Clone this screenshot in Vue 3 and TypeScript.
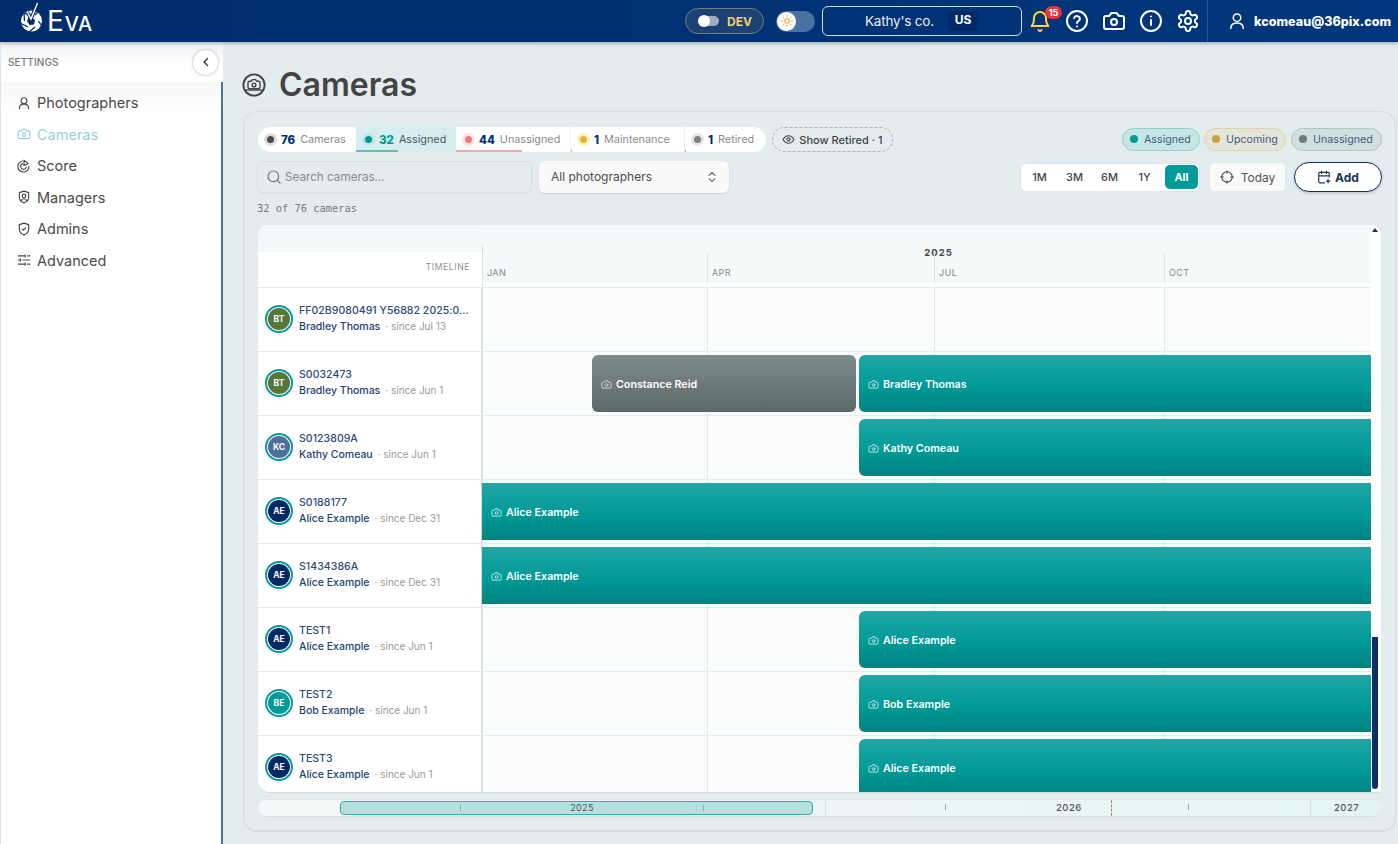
<script setup lang="ts">
interface Bar { left: number; width: number; label: string; grey?: boolean }
interface Row { code: string; name: string; since: string; initials: string; color: string; bars: Bar[] }

const nav = [
  { label: 'Photographers', icon: 'user' },
  { label: 'Cameras', icon: 'camera', active: true },
  { label: 'Score', icon: 'score' },
  { label: 'Managers', icon: 'manager' },
  { label: 'Admins', icon: 'admin' },
  { label: 'Advanced', icon: 'sliders' },
]

const tabs = [
  { count: 76, label: 'Cameras', dot: '#4a4a4a', halo: '#dcdcdc', cls: 'first', line: 0, lineColor: '' },
  { count: 32, label: 'Assigned', dot: '#009b98', halo: '#bfe4e4', cls: 'on', line: 42, lineColor: '#5dbfbc' },
  { count: 44, label: 'Unassigned', dot: '#ee7a80', halo: '#fbe1e2', cls: '', line: 66, lineColor: '#f5a9ac' },
  { count: 1, label: 'Maintenance', dot: '#dfba22', halo: '#f8f0cc', cls: '', line: 1, lineColor: '#e4c850' },
  { count: 1, label: 'Retired', dot: '#808080', halo: '#e4e4e4', cls: 'last', line: 1, lineColor: '#aaaaaa' },
]

const legend = [
  { label: 'Assigned', cls: 'lg-teal' },
  { label: 'Upcoming', cls: 'lg-gold' },
  { label: 'Unassigned', cls: 'lg-grey' },
]

const ranges = ['1M', '3M', '6M', '1Y', 'All']
const months = [
  { label: 'JAN', left: 0 },
  { label: 'APR', left: 225 },
  { label: 'JUL', left: 452 },
  { label: 'OCT', left: 682 },
]

const green = '#56763a'
const navy = '#002a66'
const rest = 889 - 377

const rows: Row[] = [
  { code: 'FF02B9080491 Y56882 2025:0...', name: 'Bradley Thomas', since: '· since Jul 13', initials: 'BT', color: green, bars: [] },
  { code: 'S0032473', name: 'Bradley Thomas', since: '· since Jun 1', initials: 'BT', color: green, bars: [
    { left: 110, width: 264, label: 'Constance Reid', grey: true },
    { left: 377, width: rest, label: 'Bradley Thomas' },
  ] },
  { code: 'S0123809A', name: 'Kathy Comeau', since: '· since Jun 1', initials: 'KC', color: '#4e6f9c', bars: [{ left: 377, width: rest, label: 'Kathy Comeau' }] },
  { code: 'S0188177', name: 'Alice Example', since: '· since Dec 31', initials: 'AE', color: navy, bars: [{ left: 0, width: 889, label: 'Alice Example' }] },
  { code: 'S1434386A', name: 'Alice Example', since: '· since Dec 31', initials: 'AE', color: navy, bars: [{ left: 0, width: 889, label: 'Alice Example' }] },
  { code: 'TEST1', name: 'Alice Example', since: '· since Jun 1', initials: 'AE', color: navy, bars: [{ left: 377, width: rest, label: 'Alice Example' }] },
  { code: 'TEST2', name: 'Bob Example', since: '· since Jun 1', initials: 'BE', color: '#009b98', bars: [{ left: 377, width: rest, label: 'Bob Example' }] },
  { code: 'TEST3', name: 'Alice Example', since: '· since Jun 1', initials: 'AE', color: navy, bars: [{ left: 377, width: rest, label: 'Alice Example' }] },
]
</script>

<template>
  <div class="app">
    <header class="top">
      <div class="logo">
        <svg class="logo-mark" viewBox="0 0 24 32" width="24" height="32" aria-hidden="true">
          <circle cx="11.500" cy="19" r="10.500" fill="#fff" />
          <g stroke="#002c6b" stroke-width="1.300">
            <path d="M8 13 L1 9" />
            <path d="M15 13 L22 6" />
            <path d="M18.500 19 L23 26" />
            <path d="M15 25 L8 31" />
            <path d="M8 25 L0 21" />
            <path d="M4.500 19 L4 10" />
          </g>
          <path d="M11.500 15 L15 18 L14 22.500 L9.500 23 L7 19 L8.500 15.500 Z" fill="#002c6b" />
          <path d="M7.500 10 L11 17 L17.500 1" fill="none" stroke="#002c6b" stroke-width="3.500" />
          <path d="M7.500 10 L11 17 L17.500 1" fill="none" stroke="#fff" stroke-width="1.400" />
        </svg>
        <span class="logo-text"><span class="logo-e">E</span>VA</span>
      </div>
      <div class="top-right">
        <div class="dev-pill"><span class="dev-switch"><i></i></span><span class="dev-label">DEV</span></div>
        <div class="theme-switch">
          <span class="sun">
            <svg viewBox="0 0 16 16" width="14" height="14" aria-hidden="true">
              <circle cx="8" cy="8" r="2.600" fill="none" stroke="#f0a63a" stroke-width="1.200" />
              <path d="M8 1v2.400M8 12.600V15M1 8h2.400M12.600 8H15M3 3l1.700 1.700M11.300 11.300 13 13M13 3l-1.700 1.700M4.700 11.300 3 13" stroke="#f0a63a" stroke-width="1.100" />
            </svg>
          </span>
        </div>
        <div class="company"><span class="company-name">Kathy's co.</span><span class="company-tag">US</span></div>
        <div class="bell">
          <svg viewBox="0 0 24 24" width="24" height="24" fill="none" stroke="#ffd92e" stroke-width="2" stroke-linecap="round" stroke-linejoin="round" aria-hidden="true">
            <path d="M6 9a6 6 0 0 1 12 0c0 6 2.500 8 2.500 8h-17S6 15 6 9" />
            <path d="M10.300 21a2 2 0 0 0 3.400 0" />
          </svg>
          <span class="badge">15</span>
        </div>
        <svg class="top-ico" viewBox="0 0 24 24" width="24" height="24" fill="none" stroke="#fff" stroke-width="2" stroke-linecap="round" stroke-linejoin="round" aria-hidden="true">
          <circle cx="12" cy="12" r="10" />
          <path d="M9.100 9a3 3 0 0 1 5.800 1c0 2-3 2.500-3 4" />
          <path d="M12 17.500h.01" />
        </svg>
        <svg class="top-ico" viewBox="0 0 24 24" width="24" height="24" fill="none" stroke="#fff" stroke-width="2" stroke-linecap="round" stroke-linejoin="round" aria-hidden="true">
          <path d="M14.500 4h-5L7 7H4a2 2 0 0 0-2 2v9a2 2 0 0 0 2 2h16a2 2 0 0 0 2-2V9a2 2 0 0 0-2-2h-3z" />
          <circle cx="12" cy="13" r="3" />
        </svg>
        <svg class="top-ico" viewBox="0 0 24 24" width="24" height="24" fill="none" stroke="#fff" stroke-width="2" stroke-linecap="round" stroke-linejoin="round" aria-hidden="true">
          <circle cx="12" cy="12" r="10" />
          <path d="M12 16v-5M12 7.500h.01" />
        </svg>
        <svg class="top-ico" viewBox="0 0 24 24" width="24" height="24" fill="none" stroke="#fff" stroke-width="2" stroke-linecap="round" stroke-linejoin="round" aria-hidden="true">
          <path d="M12.220 2h-.44a2 2 0 0 0-2 2v.18a2 2 0 0 1-1 1.730l-.43.250a2 2 0 0 1-2 0l-.15-.080a2 2 0 0 0-2.730.730l-.22.380a2 2 0 0 0 .730 2.730l.15.100a2 2 0 0 1 1 1.720v.510a2 2 0 0 1-1 1.740l-.15.090a2 2 0 0 0-.730 2.730l.22.380a2 2 0 0 0 2.730.730l.15-.080a2 2 0 0 1 2 0l.43.250a2 2 0 0 1 1 1.730V20a2 2 0 0 0 2 2h.44a2 2 0 0 0 2-2v-.18a2 2 0 0 1 1-1.730l.43-.250a2 2 0 0 1 2 0l.15.080a2 2 0 0 0 2.730-.730l.22-.390a2 2 0 0 0-.730-2.730l-.15-.080a2 2 0 0 1-1-1.740v-.500a2 2 0 0 1 1-1.740l.15-.090a2 2 0 0 0 .730-2.730l-.22-.380a2 2 0 0 0-2.730-.730l-.15.080a2 2 0 0 1-2 0l-.43-.250a2 2 0 0 1-1-1.730V4a2 2 0 0 0-2-2z" />
          <circle cx="12" cy="12" r="3" />
        </svg>
        <div class="user">
          <svg viewBox="0 0 24 24" width="20" height="20" fill="none" stroke="#fff" stroke-width="1.800" stroke-linecap="round" aria-hidden="true">
            <circle cx="12" cy="8" r="4.500" />
            <path d="M4.500 21c0-4 3-6.500 7.500-6.500s7.500 2.500 7.500 6.500" />
          </svg>
          <span class="email">kcomeau@36pix.com</span>
        </div>
      </div>
    </header>

    <div class="body">
      <aside class="side">
        <div class="side-head">
          <span>SETTINGS</span>
          <button class="collapse" type="button" aria-label="Collapse">
            <svg viewBox="0 0 12 12" width="12" height="12" fill="none" stroke="#333" stroke-width="1.300" stroke-linecap="round" stroke-linejoin="round"><path d="M7.500 2.500 4 6l3.500 3.500" /></svg>
          </button>
        </div>
        <nav class="nav">
          <div v-for="item in nav" :key="item.label" class="nav-item" :class="{ active: item.active }">
            <svg viewBox="0 0 24 24" width="14" height="14" fill="none" stroke="currentColor" stroke-width="2" stroke-linecap="round" stroke-linejoin="round" aria-hidden="true">
              <template v-if="item.icon === 'user'">
                <circle cx="12" cy="8" r="5" /><path d="M4 22c0-5 3-8 8-8s8 3 8 8" />
              </template>
              <template v-else-if="item.icon === 'camera'">
                <path d="M14.500 4h-5L7 7H4a2 2 0 0 0-2 2v9a2 2 0 0 0 2 2h16a2 2 0 0 0 2-2V9a2 2 0 0 0-2-2h-3z" /><circle cx="12" cy="13" r="3" />
              </template>
              <template v-else-if="item.icon === 'score'">
                <path d="M9 3.500a9.500 9.500 0 1 0 11.500 9" /><path d="M9.500 8a5 5 0 1 0 6.500 6" /><path d="M12 2v9l7-3z" />
              </template>
              <template v-else-if="item.icon === 'manager'">
                <path d="M12 2 4 4.500V12c0 5 3.500 8.500 8 10 4.500-1.500 8-5 8-10V4.500z" /><circle cx="12" cy="10" r="3" /><path d="M7.500 18c1-2 2.500-3 4.500-3s3.500 1 4.500 3" />
              </template>
              <template v-else-if="item.icon === 'admin'">
                <path d="M12 2 4 4.500V12c0 5 3.500 8.500 8 10 4.500-1.500 8-5 8-10V4.500z" /><path d="m9 12 2 2 4-4" />
              </template>
              <template v-else>
                <path d="M2 5h12M18 5h4M2 12h4M10 12h12M2 19h12M18 19h4M14 3v4M6 10v4M14 17v4" />
              </template>
            </svg>
            <span>{{ item.label }}</span>
          </div>
        </nav>
      </aside>

      <main class="main">
        <div class="title">
          <svg viewBox="0 0 26 26" width="24" height="24" fill="none" stroke="#444" stroke-width="2" aria-hidden="true">
            <circle cx="13" cy="13" r="11.500" />
            <path d="M8 9h2l1.300-1.800h3.400L16 9h2a1.500 1.500 0 0 1 1.500 1.500v5A1.500 1.500 0 0 1 18 17H8a1.500 1.500 0 0 1-1.500-1.500v-5A1.500 1.500 0 0 1 8 9z" stroke-width="1.500" />
            <circle cx="13" cy="13" r="2" stroke-width="1.500" />
            <path d="M3 18.500h20" stroke-width="1.500" />
          </svg>
          <h1>Cameras</h1>
        </div>

        <section class="panel">
          <div class="filter-row">
            <div class="tabs">
              <div v-for="t in tabs" :key="t.label" class="tab" :class="t.cls">
                <i class="dot" :style="{ background: t.dot, boxShadow: `0 0 0 3px ${t.halo}` }"></i>
                <b>{{ t.count }}</b>
                <span>{{ t.label }}</span>
                <em v-if="t.line" class="tab-line" :style="{ width: t.line + 'px', background: t.lineColor }"></em>
              </div>
            </div>
            <div class="show-retired">
              <svg viewBox="0 0 24 24" width="13" height="13" fill="none" stroke="#444" stroke-width="2" stroke-linecap="round" stroke-linejoin="round" aria-hidden="true">
                <path d="M2 12s3.600-7 10-7 10 7 10 7-3.600 7-10 7-10-7-10-7" /><circle cx="12" cy="12" r="3" />
              </svg>
              <span>Show Retired · 1</span>
            </div>
            <div class="legend">
              <div v-for="l in legend" :key="l.label" class="lg" :class="l.cls"><i></i>{{ l.label }}</div>
            </div>
          </div>

          <div class="tool-row">
            <div class="search">
              <svg viewBox="0 0 24 24" width="16" height="16" fill="none" stroke="#777" stroke-width="1.800" stroke-linecap="round" aria-hidden="true">
                <circle cx="11" cy="11" r="8" /><path d="m21 21-4.300-4.300" />
              </svg>
              <span>Search cameras...</span>
            </div>
            <div class="select">
              <span>All photographers</span>
              <svg viewBox="0 0 12 16" width="10" height="14" fill="none" stroke="#666" stroke-width="1.300" stroke-linecap="round" stroke-linejoin="round" aria-hidden="true">
                <path d="M2.500 6 6 2.500 9.500 6M2.500 10 6 13.500 9.500 10" />
              </svg>
            </div>
            <div class="range">
              <span v-for="r in ranges" :key="r" class="range-btn" :class="{ on: r === 'All' }">{{ r }}</span>
            </div>
            <div class="today">
              <svg viewBox="0 0 16 16" width="14" height="14" fill="none" stroke="#444" stroke-width="1.200" stroke-linecap="round" aria-hidden="true">
                <circle cx="8" cy="8" r="6" /><path d="M8 .8v3M8 12.200v3M.8 8h3M12.200 8h3" />
              </svg>
              <span>Today</span>
            </div>
            <div class="add">
              <svg viewBox="0 0 24 24" width="14" height="14" fill="none" stroke="#1d3557" stroke-width="2" stroke-linecap="round" stroke-linejoin="round" aria-hidden="true">
                <path d="M21 12V6a2 2 0 0 0-2-2H5a2 2 0 0 0-2 2v14a2 2 0 0 0 2 2h8M16 2v4M8 2v4M3 10h18M19 16v6M16 19h6" />
              </svg>
              <span>Add</span>
            </div>
          </div>

          <div class="count">32 of 76 cameras</div>

          <div class="chart-wrap">
            <div class="chart">
              <div class="chart-head">
                <div class="head-left"><div class="head-spacer"></div><div class="head-label">TIMELINE</div></div>
                <div class="head-right">
                  <div class="year">2025</div>
                  <div class="months">
                    <span v-for="m in months" :key="m.label" class="month" :style="{ left: m.left + 'px' }">{{ m.label }}</span>
                  </div>
                </div>
              </div>
              <div v-for="row in rows" :key="row.code" class="row">
                <div class="row-left">
                  <div class="avatar-ring"><div class="avatar" :style="{ background: row.color }">{{ row.initials }}</div></div>
                  <div class="row-text">
                    <div class="code">{{ row.code }}</div>
                    <div class="who"><span class="name">{{ row.name }}</span> <span class="since">{{ row.since }}</span></div>
                  </div>
                </div>
                <div class="row-track">
                  <i v-for="m in months" :key="m.label" class="grid" :style="{ left: m.left + 'px' }"></i>
                  <div v-for="b in row.bars" :key="b.label + b.left" class="bar" :class="{ grey: b.grey, full: b.left === 0 }" :style="{ left: b.left + 'px', width: b.width + 'px' }">
                    <svg viewBox="0 0 24 24" width="11" height="11" fill="none" stroke="currentColor" stroke-width="2" stroke-linecap="round" stroke-linejoin="round" aria-hidden="true">
                      <path d="M14.500 4h-5L7 7H4a2 2 0 0 0-2 2v9a2 2 0 0 0 2 2h16a2 2 0 0 0 2-2V9a2 2 0 0 0-2-2h-3z" /><circle cx="12" cy="13" r="3" />
                    </svg>
                    <span>{{ b.label }}</span>
                  </div>
                </div>
              </div>
            </div>
            <div class="vscroll">
              <i class="arrow"></i>
              <i class="thumb"></i>
            </div>
          </div>

          <div class="mini">
            <div class="mini-sel"><i class="tk t1"></i><span>2025</span><i class="tk t2"></i></div>
            <i class="mini-line l1"></i>
            <i class="tk mt1"></i>
            <span class="mini-year y26">2026</span>
            <i class="mini-now"></i>
            <i class="tk mt2"></i>
            <i class="mini-line l2"></i>
            <span class="mini-year y27">2027</span>
          </div>
        </section>
      </main>
    </div>
  </div>
</template>

<style scoped>
.app { width: 1398px; height: 844px; display: flex; flex-direction: column; overflow: hidden; background: #e3ecee; font-family: Inter, "Noto Sans", sans-serif; color: #444; }
.top { height: 42px; flex: none; display: flex; align-items: center; justify-content: space-between; background: linear-gradient(90deg, #002c6b, #00377c); box-shadow: 0 1px 4px rgba(0,0,0,.35); position: relative; z-index: 3; }
.logo { display: flex; align-items: center; margin-left: 20px; color: #fff; }
.logo-mark { margin-top: -6px; }
.logo-text { font-size: 20px; font-weight: 500; margin-left: 3px; margin-top: 2px; letter-spacing: .4px; line-height: 28px; }
.logo-e { font-size: 28px; font-weight: 400; letter-spacing: 1px; }
.top-right { display: flex; align-items: center; height: 42px; }
.dev-pill { width: 79px; height: 26px; box-sizing: border-box; border: 1px solid #6f7f7f; border-radius: 13px; background: #1c4274; display: flex; align-items: center; padding-left: 12px; gap: 8px; }
.dev-switch { width: 21px; height: 10px; border-radius: 5px; background: #9eadbf; position: relative; display: block; }
.dev-switch i { position: absolute; left: 0; top: -1px; width: 12px; height: 12px; border-radius: 50%; background: #fff; }
.dev-label { color: #eed072; font-size: 12px; font-weight: 700; }
.theme-switch { width: 39px; height: 21px; border-radius: 11px; background: #4a719f; margin-left: 12px; position: relative; }
.sun { position: absolute; left: 1px; top: 1px; width: 19px; height: 19px; border-radius: 50%; background: #fff; display: flex; align-items: center; justify-content: center; }
.company { width: 200px; height: 30px; box-sizing: border-box; margin-left: 7px; border: 1px solid #d5deea; border-radius: 6px; display: flex; align-items: center; padding-left: 42px; color: #e8eef5; font-size: 13.500px; }
.company-name { width: 84px; letter-spacing: -.2px; }
.company-tag { margin-left: -1px; width: 30px; height: 20px; line-height: 18px; text-align: center; background: #002a66; border-radius: 3px; font-size: 12px; font-weight: 700; color: #fff; }
.bell { position: relative; margin-left: 6px; width: 24px; height: 24px; }
.badge { position: absolute; left: 17px; top: -3px; width: 17px; height: 13px; border-radius: 7px; background: #e5333f; color: #fff; font-size: 9px; font-weight: 700; line-height: 13px; text-align: center; }
.top-ico { margin-left: 13px; }
.user { margin-left: 7px; height: 42px; width: 191px; box-sizing: border-box; border-left: 1px solid #28528a; display: flex; align-items: center; padding-left: 19px; gap: 7px; color: #fff; }
.email { font-size: 12.500px; font-weight: 800; letter-spacing: .05px; white-space: nowrap; }

.body { flex: 1; display: flex; min-height: 0; }
.side { width: 223px; flex: none; background: #fff; border-left: 1px solid #dfe5e7; box-sizing: border-box; display: flex; flex-direction: column; }
.side-head { height: 40px; flex: none; display: flex; align-items: center; justify-content: space-between; padding: 0 5px 0 7px; background: linear-gradient(180deg, #eef1f2, #fff 60%); font-size: 10px; font-weight: 500; letter-spacing: .1px; color: #777; }
.collapse { width: 25px; height: 25px; padding: 0; border: 0; border-radius: 50%; background: #fff; box-shadow: 0 0 3px rgba(0,0,0,.35); display: flex; align-items: center; justify-content: center; position: relative; }
.nav { flex: 1; border-right: 2px solid #4a74a8; padding-top: 5px; background: linear-gradient(180deg, #f7f7f7, #fff 28px); }
.nav-item { height: 31.500px; display: flex; align-items: center; gap: 6px; padding-left: 16px; font-size: 14.500px; color: #4a4a4a; }
.nav-item.active { color: #9ad1d6; }

.main { flex: 1; min-width: 0; padding: 0 2px 0 20px; display: flex; flex-direction: column; }
.title { height: 69px; flex: none; display: flex; align-items: center; gap: 13px; margin-left: -1px; padding-top: 17px; box-sizing: border-box; }
.title h1 { margin: 0; font-size: 32px; font-weight: 600; color: #444; line-height: 40px; }
.panel { width: 1153px; height: 721px; box-sizing: border-box; border: 1px solid #d6dfe1; border-bottom-width: 2px; border-radius: 14px; padding: 15px 14px 0 13px; display: flex; flex-direction: column; }

.filter-row { height: 25px; display: flex; align-items: center; flex: none; margin-left: 1px; }
.tabs { display: flex; height: 25px; background: #fff; border-radius: 13px; overflow: hidden; }
.tab { position: relative; display: flex; align-items: center; font-size: 10.800px; color: #8a8a8a; box-sizing: border-box; padding-left: 9px; border-left: 1px solid #eceff0; }
.tab:nth-child(1) { width: 98px; border-left: 0; padding-left: 9px; }
.tab:nth-child(2) { width: 100px; background: #d6eef0; color: #4a5a5a; border-left: 0; }
.tab:nth-child(3) { width: 114px; border-left: 0; }
.tab:nth-child(4) { width: 114px; }
.tab:nth-child(5) { width: 82px; }
.dot { width: 7px; height: 7px; border-radius: 50%; flex: none; margin-right: 7px; }
.tab b { font-size: 11.500px; font-weight: 800; color: #00306f; margin-right: 5px; }
.tab.on b { color: #009b98; }
.tab-line { position: absolute; left: 0; bottom: 0; height: 2px; }
.show-retired { margin-left: 6px; width: 121px; height: 25px; box-sizing: border-box; border: 1px dashed #a8b3b5; border-radius: 13px; display: flex; align-items: center; justify-content: center; gap: 4px; font-size: 11px; font-weight: 500; color: #444; }
.legend { margin-left: auto; display: flex; margin-right: -1px; margin-top: -1px; }
.lg { height: 23px; box-sizing: border-box; border-radius: 12px; display: flex; align-items: center; gap: 6px; font-size: 10.700px; padding: 0 0 0 7px; color: #3f5c7f; border: 1px solid; margin-left: 4px; white-space: nowrap; }
.lg:last-child { margin-left: 5px; }
.lg i { width: 8px; height: 8px; border-radius: 50%; flex: none; }
.lg-teal { width: 78px; background: #c8e5e6; border-color: #90d0cf; }
.lg-teal i { background: #009b98; }
.lg-gold { width: 82px; background: #e3e5da; border-color: #e0d3a7; }
.lg-gold i { background: #cd9c3c; }
.lg-grey { width: 91px; background: #d3dfdf; border-color: #b5c3c3; }
.lg-grey i { background: #6e7a7a; }

.tool-row { height: 32px; margin-top: 9px; display: flex; align-items: center; flex: none; }
.search { width: 275px; height: 32px; box-sizing: border-box; border: 1px solid #d8e0e2; border-radius: 6px; background: #e6eced; display: flex; align-items: center; gap: 3px; padding-left: 8px; font-size: 11.700px; color: #8a8a8a; box-shadow: 0 1px 1px rgba(0,0,0,.04); }
.select { margin-left: 7px; width: 190px; height: 32px; box-sizing: border-box; border-radius: 6px; background: #fafafa; box-shadow: 0 1px 2px rgba(0,0,0,.12); display: flex; align-items: center; justify-content: space-between; padding: 0 12px 1px; font-size: 12px; color: #4a4a4a; }
.range { margin-left: auto; width: 180px; height: 29px; box-sizing: border-box; background: #fff; border: 1px solid #dfe5e7; border-radius: 6px; display: flex; align-items: center; padding-left: 1px; font-size: 11px; font-weight: 500; color: #444; }
.range-btn { width: 35px; text-align: center; }
.range-btn.on { width: 33px; height: 24px; line-height: 24px; margin-left: 3px; background: #009b98; color: #fff; font-weight: 700; border-radius: 5px; }
.today { margin-left: 9px; width: 77px; height: 30px; box-sizing: border-box; border-radius: 5px; background: #fafafa; border: 1px solid #e5e9ea; display: flex; align-items: center; justify-content: center; gap: 7px; font-size: 12px; color: #555; }
.add { margin-left: 8px; margin-right: -1px; width: 88px; height: 30px; box-sizing: border-box; border-radius: 15px; background: #fff; border: 1.500px solid #0e2f6b; display: flex; align-items: center; justify-content: center; gap: 4px; font-size: 12px; font-weight: 700; color: #1d3557; box-shadow: 0 1px 3px rgba(0,0,0,.2); }
.count { margin-top: 8px; height: 14px; line-height: 14px; font-family: "DejaVu Sans Mono", "Liberation Mono", monospace; font-size: 10.400px; color: #7a7a7a; flex: none; }

.chart-wrap { margin-top: 10px; height: 567px; width: 1123px; margin-left: 1px; display: flex; flex: none; background: #fff; border-radius: 10px 10px 0 0; border-bottom-left-radius: 12px; overflow: hidden; box-shadow: 0 1px 1px rgba(0,0,0,.08); position: relative; }
.chart { width: 1113px; overflow: hidden; flex: none; }
.chart-head { height: 63px; display: flex; border-bottom: 1px solid #e6eaeb; box-sizing: border-box; }
.head-left { width: 224px; flex: none; box-sizing: border-box; }
.head-spacer { height: 27px; background: #f5f8f9; }
.head-label { text-align: right; padding-right: 12px; font-size: 8.500px; letter-spacing: .65px; color: #8f8f8f; padding-top: 10px; }
.head-right { flex: 1; background: #f6f9f9; position: relative; border-bottom: 4px solid #fff; }
.head-right::before { content: ""; position: absolute; left: 0; top: 21px; bottom: -4px; width: 1px; background: #d6dcdd; }
.year { text-align: center; font-size: 9.500px; font-weight: 700; letter-spacing: 1px; color: #444; padding: 22px 0 0 24px; height: 15px; line-height: 12px; }
.months { position: absolute; left: 0; right: 0; top: 27px; bottom: 0; }
.month { position: absolute; top: 0; height: 32px; border-left: 1px solid #dfe4e5; padding: 15px 0 0 4px; box-sizing: border-box; font-size: 9px; letter-spacing: .4px; color: #888; line-height: 11px; }
.row { height: 64px; display: flex; box-sizing: border-box; border-bottom: 1px solid #e6eaeb; }
.row-left { width: 224px; flex: none; box-sizing: border-box; border-right: 1px solid #d6dcdd; background: #fff; display: flex; align-items: center; padding-left: 7px; gap: 5px; position: relative; z-index: 1; }
.avatar-ring { width: 28px; height: 28px; box-sizing: border-box; border: 2px solid #0b9b98; border-radius: 50%; padding: 1px; background: #fff; flex: none; margin-top: -1px; }
.avatar { width: 22px; height: 22px; border-radius: 50%; color: #fff; font-size: 8.500px; font-weight: 700; text-align: center; line-height: 23px; }
.row-text { min-width: 0; margin-top: -3px; margin-left: 1px; }
.code { font-size: 10.500px; line-height: 16px; font-weight: 500; color: #2c4a78; white-space: nowrap; letter-spacing: .05px; }
.who { font-size: 10.500px; line-height: 15px; white-space: nowrap; }
.name { color: #1f3f74; font-weight: 500; }
.since { color: #9a9a9a; margin-left: 2px; font-size: 10px; }
.row-track { flex: 1; position: relative; background: #fafcfc; }
.grid { position: absolute; top: 0; bottom: 0; width: 1px; background: #e3e7e8; }
.bar { position: absolute; top: 3px; height: 57px; box-sizing: border-box; border-radius: 6px 0 0 6px; background: linear-gradient(180deg, #20a6a4, #009a97 55%, #00827f); color: #fff; display: flex; align-items: center; padding: 1px 0 0 9px; gap: 4px; font-size: 10.700px; font-weight: 600; }
.bar svg { color: #c7ecea; flex: none; }
.bar.full { border-radius: 0; }
.bar.grey { background: linear-gradient(180deg, #7f8c8c, #6c7878 55%, #5d6868); border-radius: 6px; }
.bar.grey svg { color: #d0d6d6; }
.vscroll { flex: 1; position: relative; background: #fff; }
.arrow { position: absolute; left: 1px; top: 3px; width: 0; height: 0; border-left: 3px solid transparent; border-right: 3px solid transparent; border-bottom: 4px solid #0d2f6b; }
.thumb { position: absolute; left: 1px; top: 412px; width: 6px; height: 152px; background: #0d2f6b; border-radius: 0 0 3px 3px; }

.mini { margin-top: 8px; height: 16px; width: 1122px; margin-left: 1px; border-radius: 8px; background: linear-gradient(90deg, #f6f9f9, #e4f4f4); position: relative; box-shadow: 0 1px 0 rgba(0,0,0,.05); flex: none; }
.mini-sel { position: absolute; left: 82px; top: 1px; width: 473px; height: 14px; box-sizing: border-box; background: #b5e0de; border: 1px solid #3aa9a6; border-radius: 4px; text-align: center; padding-left: 11px; font-size: 9px; letter-spacing: .4px; line-height: 12px; color: #4a5a5a; }
.tk { position: absolute; top: 4px; width: 1px; height: 6px; background: #8aa; }
.t1 { left: 119px; top: 3px; }
.t2 { left: 362px; top: 3px; }
.mt1 { left: 687px; }
.mt2 { left: 930px; }
.mini-line { position: absolute; top: 0; bottom: 0; width: 1px; background: #dbe3e4; }
.l1 { left: 567px; }
.l2 { left: 1052px; }
.mini-year { position: absolute; top: 0; font-size: 9.500px; line-height: 16px; font-weight: 500; letter-spacing: .5px; color: #555; }
.y26 { left: 798px; }
.y27 { left: 1076px; }
.mini-now { position: absolute; left: 853px; top: 0; bottom: 0; border-left: 1px dashed #d86a6a; }
</style>

<style>
html, body { margin: 0; padding: 0; background: #e3ecee; }
</style>
